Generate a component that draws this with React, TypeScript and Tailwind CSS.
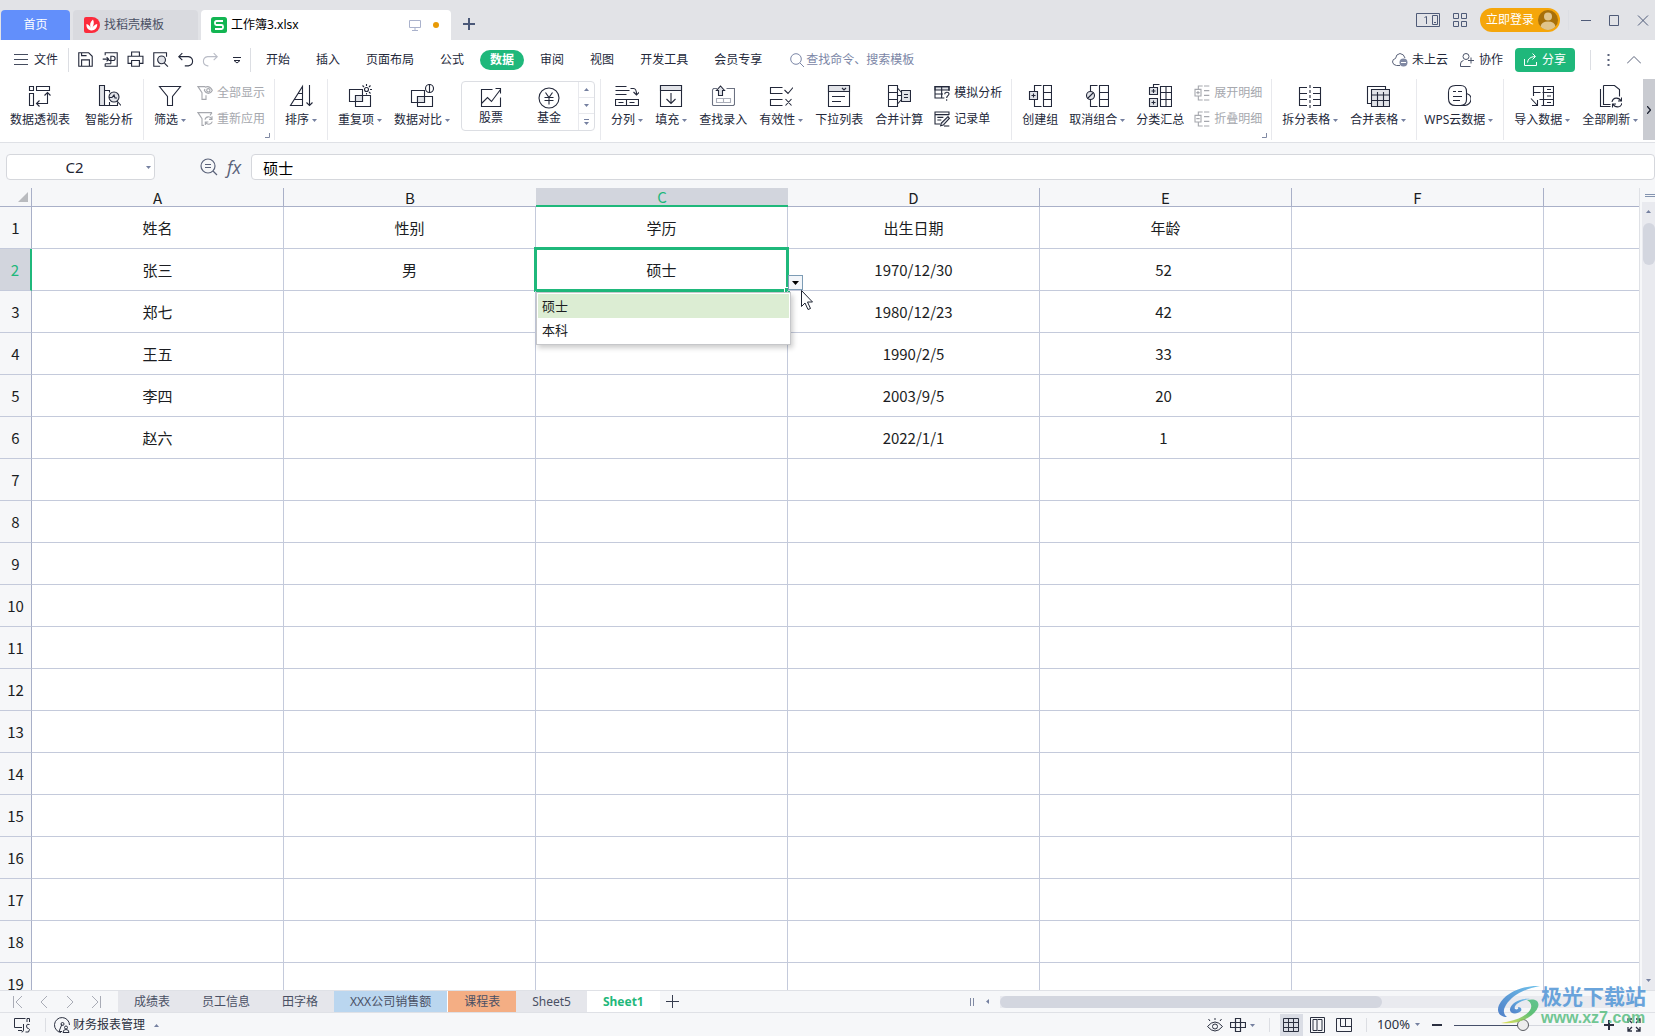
import { ReactNode, useState } from 'react'
import clsx from 'clsx'

const shade = '#e1e3e8'

// Line icons, all drawn on a 24px grid
const icons: Record<string, ReactNode> = {
  pivot: <path d="M1.5 2.5h4v4h-4zM8.5 2.5h13v4h-13zM1.5 9.5h4v12h-4zM19.5 8.5v11h-11M16.5 11.5l3-3 3 3M11.5 16.5l-3 3 3 3" />,
  analyze: (
    <>
      <path fill={shade} d="M2.5 1.5h5v20h-5z" />
      <path d="M7.5 6.5h5v2M7.5 21.5h13v-3M12.5 18v3.500M20 17l4 4.500" />
      <circle cx="17" cy="13" r="5" fill={shade} />
      <path d="M12 13.500h3l2-2.500 1 3h2" />
    </>
  ),
  filter: <path d="M1.5 2.5h21l-8 10v9h-5v-9z" />,
  filterEye: (
    <>
      <path d="M12.500 2.500H1.500l6 9v10h6v-6" />
      <path d="M12 3.500c4-2 8-1 11 4.500-3 6-9 6-12 0l1-2" />
      <circle cx="17" cy="8" r="2.500" />
    </>
  ),
  filterRedo: <path d="M22.500 2.500h-21l6 9v10h3M22.500 2.500l-3 4M12 13c1-5 8-6 10-1M22.500 8v4.500H18M23 16c-2 5-8 5-10 1M12.500 21v-4.500H17" />,
  sort: <path d="M1.500 21.500h12v-19zM5.500 15.500h8M9.500 9.500h4M20.500 1v20.500M17.500 18.500l3 3 3-3" />,
  repeat: (
    <>
      <path d="M1.500 5.500h13v12h-13zM7.500 11.500h15v11h-15z" />
      <path fill={shade} d="M7.500 11.500h7v6h-7z" />
      <circle cx="18.500" cy="5.500" r="2" />
      <path d="M18.500 0v2M18.500 9v1.500M13 5.500h2M22 5.500h2M14.500 1.500l1.500 1.500M22.500 1.500l-1.500 1.500M22.500 9.500l-1.500-1.500" />
    </>
  ),
  compare: (
    <>
      <path d="M1.500 6.500h13v12h-13zM7.500 12.500h15v10h-15z" />
      <path fill={shade} d="M7.500 12.500h7v6h-7z" />
      <circle cx="19.500" cy="4.500" r="4" fill="#fff" />
      <path d="M19.500 0v9" />
    </>
  ),
  stock: <path d="M13.500 3.500h-11v17h19v-9M2.500 17.500l6-6 4 4 9-12M16.500 2.500h5v5" />,
  fund: (
    <>
      <circle cx="12" cy="12" r="10" />
      <path d="M8.500 6.500l3.500 5 3.500-5M12 11.500v7M7.500 11.500h9M7.500 14.500h9" />
    </>
  ),
  split: <path d="M.5 2.500h11M.5 6.500h14M.5 10.500h11M.5 15.500h11v6H.5zM11.500 15.500h12v6h-12zM3.500 18.500h5M14.500 18.500h5M15.500 4.500h3q3 0 3 6M18.500 8l3 3 3-3" />,
  fill: (
    <>
      <path d="M1.500 1.500h21v21h-21z" />
      <path fill={shade} d="M1.500 1.500h21v5h-21z" />
      <path d="M12 9v10.500M7.500 15l4.500 4.500 4.500-4.500" />
    </>
  ),
  lookup: (
    <>
      <path d="M6 4.500H2.500L1.500 6v15l1 .5h20l1-1v-16h-8" stroke="#6b7181" />
      <path d="M5.500 14.500h7v4h-7zM12.500 14.500h7v4h-7z" stroke="#a9adb8" />
      <path fill={shade} d="M7.500 11.500v-5H5.500l4-4.500 4 4.500h-2v5z" />
    </>
  ),
  valid: <path d="M13.500 3.500h-12v6h12M13.500 15.500h-12v6h12M15.500 6l3.500 3.500 5-6M16.500 15l6 6.500M22.500 15l-6 6.500" />,
  dropList: (
    <>
      <path d="M1.500 1.500h21v21h-21z" />
      <path fill={shade} d="M1.500 1.500h21v6h-21z" />
      <path d="M15 4l2 2 2-2M5 12.500h13M5 17.500h9" />
    </>
  ),
  consolidate: (
    <>
      <path d="M1.500 1.500h9v21h-9zM1.500 8.500h9M1.500 15.500h9M10.500 4l4 4.500M10.500 20l4-4.500M10.500 11.500h4" />
      <path fill={shade} d="M14.500 6.500h9v11h-9z" />
      <path d="M17 10.500h4M17 13.500h4" />
    </>
  ),
  whatIf: (
    <>
      <path fill={shade} d="M1.500 2.500h21v5h-21z" />
      <path d="M22.500 9V2.500h-21v17h14M1.500 13.500h12M11.500 2.500v17M16 14c0-4 6-4 6.500-1s-3.500 3-3.500 6.500M19 21.500v2" />
    </>
  ),
  record: (
    <>
      <path d="M22.500 6V1.500h-21v18h8M1.500 5.500h21M5 9.500h9M5 13.500h6" />
      <path fill={shade} d="M21 8.500l2 2.500-9 10-4 1 1-4z" />
      <path d="M15 22.500h8" />
    </>
  ),
  group: (
    <>
      <path d="M13.500 1.500h-7v21h7M15.500 1.500h8v21h-8zM15.500 8.500h8M15.500 15.500h8" />
      <path fill={shade} d="M1.500 7.500h8v8h-8z" />
      <path d="M3.500 11.500h4M5.500 9.500v4" />
    </>
  ),
  ungroup: (
    <>
      <path d="M12.500 1.500h-7v21h7M14.500 1.500h9v21h-9zM14.500 8.500h9M14.500 15.500h9" />
      <circle cx="5.500" cy="11.500" r="4" fill={shade} />
      <path d="M2.500 14.500l6-6" />
    </>
  ),
  subtotal: (
    <>
      <path d="M12.500 2.500h11v20h-11zM12.500 8.500h11M12.500 15.500h11M18 2.500v20M5.500 4v-3.500h6" />
      <path fill={shade} d="M1.500 3.500h8v7h-8zM1.500 14.500h8v8h-8z" />
      <path d="M3.500 7h4M5.500 5v4M3.500 18.500h4M5.500 16.500v4" />
    </>
  ),
  expand: <path d="M13 1.500H6.500v4M6.500 17v5.500H13M1.500 6.500h9v10h-9zM3.500 11.500h5M6 9v5M15 1.500h8M15 8.500h8M15 15.500h8M15 22.500h8" />,
  collapse: <path d="M13 1.500H6.500v4M6.500 17v5.500H13M1.500 6.500h9v10h-9zM3.500 11.500h5M15 1.500h8M15 8.500h8M15 15.500h8M15 22.500h8" />,
  splitTable: (
    <>
      <path d="M9 3.500H1.500v18H9M15 3.500h7.500v18H15M1.500 9.500H9M1.500 15.500H9M15 9.500h7.500M15 15.500h7.500" />
      <path strokeDasharray="3 2" d="M12 1v23" />
    </>
  ),
  mergeTable: (
    <>
      <path d="M1.500 2.500h18v17h-18z" />
      <path fill={shade} d="M5.500 5.500h18v17h-18z" />
      <path d="M5.500 11h18M5.500 16.500h18M11.500 8v14.500M17.500 8v14.500" />
    </>
  ),
  cloudData: (
    <>
      <path d="M8.500 1.500h5q6 0 6 6v8q0 6-6 6h-5q-7 0-7-7v-6q0-7 7-7z" />
      <path d="M19.500 9.500q5 1.500 4.500 6t-6 6h-5M6 7.500h3M11 7.500h4M6 12.500h9M6 16.500h7" />
    </>
  ),
  importData: <path d="M3.500 12V2.500h20v19h-12M3.500 8.500h7M12.500 8.500h11M9.500 15.500h14M13.500 2.500v19M17 5.500h4M17 12h4M17 18.500h4M1 14.500l6.500 7M7.500 16v5.500H2" />,
  refresh: <path d="M5.500 1.500h11l5 4v7M12.500 20.500h-7v-19M2.500 5v17.500h10M14 18c1-5 7-5 9-1M23.500 13.500V17H20M24 19c-1 5-7 5-9 1M14.500 23.500V20H18" />,
  save: <path d="M2.500 2.500h14l5 5v14h-19zM6.500 21.500v-9h11v9M6.500 2.500v4h7" />,
  exportPdf: <path d="M4.500 6V2.500h17v19h-17V18M1 11.500h8M6.500 8.500l3 3-3 3M12.500 18V7.500h3q3 0 3 3t-3 3h-6M4.500 18h8" />,
  print: <path d="M6.500 7.500v-6h11v6M6.500 17.500h-5v-10h21v10h-5M6.500 13.500h11v8h-11z" />,
  preview: (
    <>
      <path d="M20.500 8V2.500h-18v19h9" />
      <circle cx="13.500" cy="12.500" r="5.500" fill={shade} />
      <path d="M17.500 17l5 5" />
    </>
  ),
  undo: <path d="M7.500 3L2.500 8l5 5M3 8h13q6 1 6 6.500t-6 6.500h-5" />,
  redo: <path d="M16.500 3l5 5-5 5M21 8H8q-6 1-6 6.500t6 6.500h1" />,
}

interface IconProps {
  name: string
  className?: string
}

function Icon({ name, className = 'size-6' }: IconProps) {
  // Small icons are scaled down, so the stroke is kept at one screen pixel
  return (
    <svg className={clsx('shrink-0 [&_*]:[vector-effect:non-scaling-stroke]', className)} viewBox="0 0 24 24" fill="none" stroke="currentColor" strokeWidth={1.1} aria-hidden="true">
      {icons[name]}
    </svg>
  )
}

function Caret({ up = false }: { up?: boolean }) {
  return (
    <svg className="w-[5px] h-[3px] shrink-0 text-[#7580a0]" viewBox="0 0 5 3" fill="currentColor" aria-hidden="true">
      <path d={up ? 'M0 3h5L2.500 0z' : 'M0 0h5L2.500 3z'} />
    </svg>
  )
}

function Divider({ className = 'h-6' }: { className?: string }) {
  return <span className={clsx('w-px shrink-0 bg-[#dcdee3]', className)} />
}

function TitleBar() {
  return (
    <header className="h-10 shrink-0 bg-[#e2e3e7] flex items-end pl-px pr-[6px]">
      <div className="flex items-end gap-[3px]">
        <button className="h-[30px] w-[69px] rounded-t bg-[#628ffb] text-white">首页</button>
        <button className="h-[30px] w-[125px] rounded-t bg-[#d9dadf] text-[#4a5064] flex items-center gap-1 pl-[11px]">
          <svg className="size-4" viewBox="0 0 16 16" aria-hidden="true">
            <path fill="#fc2b3c" d="M2 0h6a8 8 0 0 1 0 16H2q-2 0-2-2V2q0-2 2-2z" />
            <path fill="#fff" d="M7.500 13.500C4 13 2 10.500 2.500 7c2 .5 3.500 2 4.200 4C5.500 8 6 5 9 2.500c1.500 3 .8 5.500-.8 8.500 1-2 2.800-3.500 5-4 .3 3.500-2 6.500-5.700 6.500z" />
          </svg>
          找稻壳模板
        </button>
        <button className="h-[30px] w-[250px] rounded-t bg-white text-black flex items-center pl-[10px] pr-3">
          <svg className="size-4 mr-1" viewBox="0 0 16 16" aria-hidden="true">
            <rect width="16" height="16" rx="2.500" fill="#12b552" />
            <path fill="none" stroke="#fff" strokeWidth="1.800" d="M12 4H5.500Q4 4 4 5.500v1Q4 8 5.500 8h5Q12 8 12 9.500v1q0 1.500-1.500 1.500H4" />
          </svg>
          工作簿3.xlsx
          <svg className="w-3 h-3 ml-auto mr-3 text-[#aab2cc]" viewBox="0 0 12 12" fill="none" stroke="currentColor" aria-hidden="true">
            <path d="M.5 1.500h11v7H.5zM6 8.500v3M3 11.500h6" />
          </svg>
          <span className="size-1.5 rounded-full bg-[#e89a05]" />
        </button>
      </div>
      <button className="h-8 w-9 flex items-center justify-center text-[#4a5878]" aria-label="新建标签">
        <svg className="size-3" viewBox="0 0 12 12" stroke="currentColor" strokeWidth="2" aria-hidden="true">
          <path d="M6 0v12M0 6h12" />
        </svg>
      </button>

      <div className="ml-auto h-10 flex items-center text-[#4f5b78]">
        <button aria-label="窗口布局">
          <svg className="w-6 h-[14px]" viewBox="0 0 24 14" fill="none" stroke="currentColor" aria-hidden="true">
            <path d="M.5.5h23v13H.5zM16.500 2.500h5v9h-5zM8.500 4.500l2-1V11M18 9.500h2" />
          </svg>
        </button>
        <button className="ml-[13px]" aria-label="应用">
          <svg className="size-[14px]" viewBox="0 0 14 14" fill="none" stroke="currentColor" aria-hidden="true">
            <path d="M.5.5h5v5h-5zM8.500.5h5v5h-5zM.5 8.500h5v5h-5zM8.500 8.500h5v5h-5z" />
          </svg>
        </button>
        <button className="ml-[13px] h-6 w-20 rounded-full bg-[#f5a60b] text-white flex items-center gap-1 pl-1.5">
          立即登录
          <svg className="size-5" viewBox="0 0 20 20" aria-hidden="true">
            <circle cx="10" cy="10" r="10" fill="#a8700a" />
            <circle cx="10" cy="6.500" r="4" fill="#e0c48c" />
            <path fill="#e0c48c" d="M2.500 16.500q1-5 7.500-5t7.500 5A10 10 0 0 1 2.500 16.500z" />
          </svg>
        </button>
        <Divider className="h-5 ml-2 mr-[11px]" />
        <button aria-label="最小化">
          <svg className="size-3" viewBox="0 0 12 12" fill="none" stroke="currentColor" aria-hidden="true"><path d="M1 6.500h10" /></svg>
        </button>
        <button className="ml-4" aria-label="最大化">
          <svg className="size-3" viewBox="0 0 12 12" fill="none" stroke="currentColor" aria-hidden="true"><path d="M1.500 1.500h9v10h-9z" /></svg>
        </button>
        <button className="ml-[17px]" aria-label="关闭">
          <svg className="size-3" viewBox="0 0 12 12" fill="none" stroke="currentColor" aria-hidden="true"><path d="M1 1.500l10 10M11 1.500l-10 10" /></svg>
        </button>
      </div>
    </header>
  )
}

const menus = ['开始', '插入', '页面布局', '公式', '数据', '审阅', '视图', '开发工具', '会员专享']
const quickTools = [
  ['save', '保存'],
  ['exportPdf', '输出为PDF'],
  ['print', '打印'],
  ['preview', '打印预览'],
  ['undo', '撤销'],
  ['redo', '恢复'],
]

function MenuBar() {
  const [active, setActive] = useState('数据')

  return (
    <nav className="h-[39px] shrink-0 bg-white flex items-center pl-[14px] pr-[14px]">
      <button className="flex items-center gap-[6px]">
        <svg className="w-[14px] h-[11px] text-[#454c5e]" viewBox="0 0 14 11" fill="none" stroke="currentColor" aria-hidden="true">
          <path d="M0 .5h14M0 5.500h14M0 10.500h14" />
        </svg>
        文件
      </button>
      <Divider className="h-6 ml-[10px] mr-2" />
      <div className="flex items-center gap-2">
        {quickTools.map(([name, label]) => (
          <button key={name} aria-label={label} className={name === 'redo' ? 'text-[#b9bcc6]' : ''}>
            <Icon name={name} className="size-[17px]" />
          </button>
        ))}
        <button aria-label="更多" className="ml-1.5">
          <svg className="size-2" viewBox="0 0 8 8" fill="none" stroke="currentColor" aria-hidden="true">
            <path d="M0 1.500h8M1 4.500l3 2.500 3-2.500z" />
          </svg>
        </button>
      </div>
      <Divider className="h-6 ml-[9px] mr-[5px]" />
      <div className="flex gap-[6px]">
        {menus.map((menu) => (
          <button
            key={menu}
            onClick={() => setActive(menu)}
            className={clsx('h-5 px-[10px] rounded-full', active === menu && 'bg-[#1fb87b] text-white font-bold')}
          >
            {menu}
          </button>
        ))}
      </div>
      <label className="ml-[18px] flex items-center gap-[2px] text-[#7b86a6]">
        <svg className="size-[14px]" viewBox="0 0 14 14" fill="none" stroke="currentColor" aria-hidden="true">
          <circle cx="6" cy="6" r="5.300" />
          <path d="M10 10l4 4" />
        </svg>
        <input aria-label="查找命令" placeholder="查找命令、搜索模板" className="w-[112px] outline-none placeholder:text-[#7b86a6]" />
      </label>

      <div className="ml-auto flex items-center">
        <button className="flex items-center gap-1">
          <svg className="w-4 h-[14px]" viewBox="0 0 16 14" fill="none" stroke="#5b637a" aria-hidden="true">
            <path d="M8 12.500H4.500Q1 12 .5 9 .5 6 3.500 5.500 4 1 8 .5q4 .5 5 4.500" />
            <circle cx="11.500" cy="9.500" r="4" fill="#8089a3" stroke="none" />
            <path stroke="#fff" d="M9 9.500h5" />
          </svg>
          未上云
        </button>
        <button className="ml-3 flex items-center gap-[5px]">
          <svg className="size-[14px]" viewBox="0 0 14 14" fill="none" stroke="#4c546a" aria-hidden="true">
            <circle cx="6" cy="3.500" r="3" />
            <path d="M3.500 7.500Q.5 8 .5 11v2.500h10M8 7.500h6M11 4.500v6" />
          </svg>
          协作
        </button>
        <button className="ml-3 h-6 w-[60px] rounded bg-[#1fb87b] text-white flex items-center gap-[5px] pl-[9px]">
          <svg className="size-[13px]" viewBox="0 0 13 13" fill="none" stroke="currentColor" aria-hidden="true">
            <path d="M.5 6v6.500h12V9M3.500 9.500Q4 4 11 3.500M8.500.5l3 3-3 3" />
          </svg>
          分享
        </button>
        <Divider className="h-5 ml-[15px] mr-4" />
        <button aria-label="更多选项">
          <svg className="w-[3px] h-3" viewBox="0 0 3 12" fill="#5b637a" aria-hidden="true">
            <path d="M.5 0h2v2h-2zM.5 5h2v2h-2zM.5 10h2v2h-2z" />
          </svg>
        </button>
        <button className="ml-[17px]" aria-label="收起功能区">
          <svg className="w-[14px] h-2" viewBox="0 0 14 8" fill="none" stroke="#5b637a" aria-hidden="true"><path d="M0 7.500l7-7 7 7" /></svg>
        </button>
      </div>
    </nav>
  )
}

interface ToolProps {
  icon: string
  label: string
  menu?: boolean
}

function Tool({ icon, label, menu = false }: ToolProps) {
  return (
    <button className="shrink-0 px-[5px] pt-[5px] flex flex-col items-center">
      <Icon name={icon} />
      <span className="mt-1 flex items-center gap-[3px] leading-4">
        {label}
        {menu && <Caret />}
      </span>
    </button>
  )
}

interface SmallToolsProps {
  tools: [string, string][]
  disabled?: boolean
}

function SmallTools({ tools, disabled = false }: SmallToolsProps) {
  return (
    <div className={clsx('flex flex-col gap-2 px-1 pt-[5px]', disabled && 'text-[#a6a8ae]')}>
      {tools.map(([icon, label]) => (
        <button key={label} disabled={disabled} className="h-[18px] flex items-center gap-1 whitespace-nowrap">
          <Icon name={icon} className="size-4" />
          {label}
        </button>
      ))}
    </div>
  )
}

interface GroupProps {
  children: ReactNode
  spacing?: string
  launcher?: boolean
}

function Group({ children, spacing = 'gap-[2px] px-[5px]', launcher = false }: GroupProps) {
  return (
    <div className={clsx('relative h-[61px] shrink-0 flex items-start border-r border-[#e8e9ed]', spacing)}>
      {children}
      {launcher && (
        <svg className="absolute right-1 bottom-[2px] size-[5px] text-[#8089a3]" viewBox="0 0 5 5" fill="none" stroke="currentColor" aria-hidden="true">
          <path d="M4.500 0v4.500H0" />
        </svg>
      )}
    </div>
  )
}

function Ribbon() {
  return (
    <section className="relative z-10 h-[64px] shrink-0 bg-white flex items-start overflow-hidden border-b border-[#dfe1e6]">
      <div className="flex-1 min-w-0 overflow-hidden flex">
        <Group spacing="gap-[5px] px-[5px]">
          <Tool icon="pivot" label="数据透视表" />
          <Tool icon="analyze" label="智能分析" />
        </Group>
        <Group launcher>
          <Tool icon="filter" label="筛选" menu />
          <SmallTools disabled tools={[['filterEye', '全部显示'], ['filterRedo', '重新应用']]} />
        </Group>
        <Group>
          <Tool icon="sort" label="排序" menu />
        </Group>
        <Group>
          <Tool icon="repeat" label="重复项" menu />
          <Tool icon="compare" label="数据对比" menu />
          <div className="h-[50px] w-[134px] ml-1 mt-[2px] rounded-sm border border-[#dcdee3] flex">
            <button className="flex-1 pt-1 flex flex-col items-center leading-4">
              <Icon name="stock" />
              股票
            </button>
            <button className="flex-1 pt-1 flex flex-col items-center leading-4">
              <Icon name="fund" />
              基金
            </button>
            <div className="w-4 border-l border-[#e8e9ed] grid grid-rows-3 divide-y divide-[#e8e9ed]">
              <button className="flex items-center justify-center" aria-label="上一行"><Caret up /></button>
              <button className="flex items-center justify-center" aria-label="下一行"><Caret /></button>
              <button className="flex flex-col items-center justify-center gap-[2px]" aria-label="全部数据类型">
                <span className="w-[5px] h-px bg-[#7580a0]" />
                <Caret />
              </button>
            </div>
          </div>
        </Group>
        <Group>
          <Tool icon="split" label="分列" menu />
          <Tool icon="fill" label="填充" menu />
          <Tool icon="lookup" label="查找录入" />
          <Tool icon="valid" label="有效性" menu />
          <Tool icon="dropList" label="下拉列表" />
          <Tool icon="consolidate" label="合并计算" />
          <SmallTools tools={[['whatIf', '模拟分析'], ['record', '记录单']]} />
        </Group>
        <Group launcher spacing="gap-px px-[5px]">
          <Tool icon="group" label="创建组" />
          <Tool icon="ungroup" label="取消组合" menu />
          <Tool icon="subtotal" label="分类汇总" />
          <SmallTools disabled tools={[['expand', '展开明细'], ['collapse', '折叠明细']]} />
        </Group>
        <Group>
          <Tool icon="splitTable" label="拆分表格" menu />
          <Tool icon="mergeTable" label="合并表格" menu />
        </Group>
        <Group spacing="pl-[2px] pr-[5px]">
          <Tool icon="cloudData" label="WPS云数据" menu />
        </Group>
        <div className="pl-[5px] flex items-start gap-[2px]">
          <Tool icon="importData" label="导入数据" menu />
          <Tool icon="refresh" label="全部刷新" menu />
        </div>
      </div>
      <button className="h-[61px] w-3 shrink-0 bg-[#c9cbd1] flex items-center justify-center" aria-label="向右滚动">
        <svg className="w-1 h-2" viewBox="0 0 4 8" fill="none" stroke="#1f2433" strokeWidth="1.300" aria-hidden="true"><path d="M0 0l3.500 4L0 8" /></svg>
      </button>
    </section>
  )
}

function FormulaBar() {
  return (
    <div className="h-[45px] shrink-0 flex items-start pt-[11px] pl-1.5 text-[15px] text-black">
      <div className="h-[26px] w-[149px] shrink-0 rounded-sm border border-[#d5d7dc] bg-white flex items-center pr-[3px]">
        <input aria-label="名称框" defaultValue="C2" className="w-full min-w-0 pr-1 text-center outline-none text-[#1f2433]" />
        <Caret />
      </div>
      <div className="h-[26px] ml-[45px] flex items-center gap-[9px] text-[#5b637a]">
        <svg className="size-[18px]" viewBox="0 0 18 18" fill="none" stroke="currentColor" strokeWidth="1.200" aria-hidden="true">
          <circle cx="8" cy="8" r="7" />
          <path d="M5 6.500h6M5 9.500h6M13 13l4 4" />
        </svg>
        <button className="font-['Open_Sans'] italic text-lg leading-none" aria-label="插入函数">fx</button>
      </div>
      <input
        aria-label="编辑栏"
        defaultValue="硕士"
        className="ml-[10px] h-[26px] flex-1 min-w-0 rounded-sm border border-[#d5d7dc] bg-white px-[11px] outline-none"
      />
    </div>
  )
}

const columns = ['A', 'B', 'C', 'D', 'E', 'F', '']
const cells = [
  ['姓名', '性别', '学历', '出生日期', '年龄'],
  ['张三', '男', '硕士', '1970/12/30', '52'],
  ['郑七', '', '', '1980/12/23', '42'],
  ['王五', '', '', '1990/2/5', '33'],
  ['李四', '', '', '2003/9/5', '20'],
  ['赵六', '', '', '2022/1/1', '1'],
]
const rows = Array.from({ length: 19 }, (_, i) => i + 1)

// Frame round the selected cell, with its validation list open
function ActiveCell({ value }: { value: string }) {
  return (
    <>
      {value}
      <span className="absolute -inset-0.5 border-[3px] border-[#1fb87b] pointer-events-none" />
      <span className="absolute -right-[3px] -bottom-[3px] size-[6px] border-l border-t border-white bg-[#1fb87b]" />
      <button className="absolute left-full bottom-0 ml-px size-[15px] z-10 border border-[#7d9cb5] bg-[#f3f6fa] flex items-center justify-center" aria-label="打开下拉列表">
        <svg className="w-[7px] h-1" viewBox="0 0 7 4" aria-hidden="true"><path d="M0 0h7L3.500 4z" /></svg>
      </button>
      <ul
        role="listbox"
        aria-label="学历"
        className="absolute left-0 top-full mt-[2px] w-[255px] z-10 border border-[#c6c7ca] bg-white p-px pb-[2px] text-left text-[13px] shadow-[2px_3px_5px_rgba(0,0,0,0.2)]"
      >
        <li role="option" aria-selected="true" className="h-6 leading-6 px-1 bg-[#dcedd3]">硕士</li>
        <li role="option" aria-selected="false" className="h-6 leading-6 px-1">本科</li>
      </ul>
      <svg className="absolute left-full top-full ml-[14px] w-3 h-5 z-20" viewBox="0 0 12 20" fill="#fff" stroke="#1f2433" aria-hidden="true">
        <path d="M.5.500v16l3.500-3.500 3 6.500 2.500-1-3-6.500h5z" />
      </svg>
    </>
  )
}

function Sheet() {
  return (
    <main className="flex-1 min-h-0 flex">
      <div className="flex-1 min-w-0 overflow-hidden bg-white border-r border-[#dfe1e6]">
        <table className="w-full table-fixed border-separate border-spacing-0 text-center text-[15px] text-[#1b1d22] font-['Noto_Sans_CJK_SC',sans-serif]">
          <colgroup>
            <col className="w-8" />
            <col className="w-[252px]" />
            <col className="w-[252px]" />
            <col className="w-[252px]" />
            <col className="w-[252px]" />
            <col className="w-[252px]" />
            <col className="w-[252px]" />
            <col />
          </colgroup>
          <thead>
            <tr className="h-[19px] bg-[#f6f7f9] leading-4">
              <td className="p-0 border-r border-b border-[#a9b0c8]">
                <svg className="ml-auto mr-[3px] size-[10px]" viewBox="0 0 10 10" fill="#b9bbbf" aria-hidden="true"><path d="M10 0v10H0z" /></svg>
              </td>
              {columns.map((col) => (
                <th
                  key={col}
                  scope="col"
                  className={clsx(
                    'h-[19px] p-0 font-normal align-bottom',
                    col === 'C'
                      ? 'bg-[#d2d5dd] text-[#1fb87b] border-b-2 border-[#1fb87b]'
                      : 'border-b border-[#a9b0c8]',
                    (col === 'A' || col === 'D' || col === 'E' || col === 'F') && 'border-r',
                  )}
                >
                  {col}
                </th>
              ))}
            </tr>
          </thead>
          <tbody>
            {rows.map((row) => (
              <tr key={row} className="h-[42px]">
                <th
                  scope="row"
                  className={clsx(
                    'p-0 font-normal border-b border-b-[#c4cadb]',
                    row === 2
                      ? 'bg-[#d2d5dd] text-[#1fb87b] border-r-2 border-r-[#1fb87b]'
                      : 'bg-[#f6f7f9] border-r border-r-[#a9b0c8]',
                  )}
                >
                  {row}
                </th>
                {columns.map((col, i) => {
                  const value = cells[row - 1]?.[i] ?? ''
                  return (
                    <td
                      key={col}
                      className={clsx(
                        'relative py-0 pl-0 border-b border-[#c4cadb]',
                        i < 6 && 'border-r',
                        col === 'E' && row > 1 ? 'pr-1' : 'pr-0',
                      )}
                    >
                      {row === 2 && col === 'C' ? <ActiveCell value={value} /> : value}
                    </td>
                  )
                })}
              </tr>
            ))}
          </tbody>
        </table>
      </div>
      <div className="w-[15px] shrink-0 pl-[2px] flex flex-col">
        <div className="h-[14px] flex flex-col justify-center gap-px pl-[3px]">
          <span className="w-[10px] h-px bg-[#8494b0]" />
          <span className="w-[10px] h-px bg-[#8494b0]" />
        </div>
        <div className="flex-1 bg-[#e9eaef] flex flex-col items-center pt-2 pb-2">
          <Caret up />
          <span className="mt-[10px] w-3 h-[42px] rounded-full bg-[#d3d6df]" />
          <span className="mt-auto flex"><Caret /></span>
        </div>
      </div>
    </main>
  )
}

const sheetTabs = [
  { name: '成绩表', style: 'bg-[#e5e6eb]' },
  { name: '员工信息', style: 'bg-[#e5e6eb]' },
  { name: '田字格', style: 'bg-[#e5e6eb]' },
  { name: 'XXX公司销售额', style: 'bg-[#bad6ef] border-r border-white' },
  { name: '课程表', style: 'bg-[#f4ae84]' },
  { name: 'Sheet5', style: 'bg-[#e5e6eb]' },
  { name: 'Sheet1', style: 'bg-white text-[#1fb87b] font-bold' },
]
const navArrows = [
  ['第一张', 'M.5 0v12M9 0L3 6l6 6'],
  ['上一张', 'M8 0L2 6l6 6'],
  ['下一张', 'M2 0l6 6-6 6'],
  ['最后一张', 'M1 0l6 6-6 6M9.500 0v12'],
]

function SheetTabs() {
  return (
    <div className="h-[23px] shrink-0 flex items-center border-t border-b border-[#dfe1e6]">
      <div className="w-[118px] shrink-0 flex gap-4 pl-[13px]">
        {navArrows.map(([label, d]) => (
          <button key={label} aria-label={label}>
            <svg className="w-[10px] h-3" viewBox="0 0 10 12" fill="none" stroke="#a9acb6" aria-hidden="true"><path d={d} /></svg>
          </button>
        ))}
      </div>
      <div className="h-full flex text-[#4a5064]">
        {sheetTabs.map((tab) => (
          <button key={tab.name} className={clsx('h-full px-4 whitespace-nowrap', tab.style)}>{tab.name}</button>
        ))}
      </div>
      <button className="ml-[6px]" aria-label="新建工作表">
        <svg className="size-[13px]" viewBox="0 0 13 13" stroke="#363c4e" aria-hidden="true"><path d="M6.500 0v13M0 6.500h13" /></svg>
      </button>
      <div className="ml-auto w-[685px] flex items-center">
        <span className="w-1 h-2 border-x border-[#8089a3]" />
        <svg className="ml-3 w-[3px] h-[5px]" viewBox="0 0 3 5" fill="#7580a0" aria-hidden="true"><path d="M3 0v5L0 2.500z" /></svg>
        <div className="ml-[11px] h-3 flex-1 bg-[#e9eaef]">
          <div className="h-3 w-[382px] rounded-full bg-[#d3d6df]" />
        </div>
        <span className="w-4" />
      </div>
    </div>
  )
}

function StatusBar() {
  return (
    <footer className="h-[23px] shrink-0 flex items-center pl-[14px] pr-[14px] pt-px text-[#2b3040]">
      <button aria-label="宏编辑器">
        <svg className="size-4" viewBox="0 0 16 16" fill="none" stroke="currentColor" aria-hidden="true">
          <path d="M8 10.500H.5v-9h11M4 13.500h4M13 5V1.500h2.500V5M9.500 7v6q0 2-2 2M15.500 7.500q-3-1-3 1.500t2 2.500 0 3.500h-3" />
        </svg>
      </button>
      <Divider className="h-[14px] ml-[15px] mr-2" />
      <button className="flex items-center gap-[3px]">
        <svg className="size-4" viewBox="0 0 16 16" fill="none" stroke="currentColor" aria-hidden="true">
          <path d="M7 15.500A7.500 7.500 0 1 1 15.500 8M8 14.500H5L8 7" />
          <circle cx="8.500" cy="7" r="1.500" />
          <circle cx="12" cy="10.500" r="1.500" />
          <path d="M9 15.500q0-3 3-3t3 3z" />
        </svg>
        财务报表管理
        <span className="ml-1.5"><Caret up /></span>
      </button>

      <div className="ml-auto flex items-center">
        <button aria-label="护眼模式">
          <svg className="w-4 h-[14px]" viewBox="0 0 16 14" fill="none" stroke="currentColor" aria-hidden="true">
            <path d="M.5 8.500Q8-.5 15.500 8.500 8 17.500.5 8.500zM3 3L1.500 1M8 2V0M13 3l1.500-2" />
            <circle cx="8" cy="8.500" r="2.500" />
          </svg>
        </button>
        <button className="ml-[7px] flex items-center gap-1" aria-label="阅读模式">
          <svg className="w-4 h-[14px]" viewBox="0 0 16 14" fill="none" stroke="currentColor" strokeWidth="1.200" aria-hidden="true">
            <path d="M5.500.5h5v13h-5zM.5 4.500h15v5H.5z" />
          </svg>
          <Caret />
        </button>
        <Divider className="h-[14px] ml-[14px] mr-[10px]" />
        <button className="h-[22px] w-[23px] bg-[#dadde5] flex items-center justify-center" aria-label="普通视图">
          <svg className="w-4 h-[14px]" viewBox="0 0 16 14" fill="none" stroke="currentColor" aria-hidden="true">
            <path d="M.5.500h15v13H.5zM.5 4.500h15M.5 9.500h15M5.500.5v13M10.500.5v13" />
          </svg>
        </button>
        <button className="ml-[7px]" aria-label="分页预览">
          <svg className="w-[15px] h-4" viewBox="0 0 15 16" fill="none" stroke="currentColor" aria-hidden="true">
            <path d="M.5.500h14v15H.5zM3 2.500h4v11H3zM7.500 2.500H12v11H7.500" />
          </svg>
        </button>
        <button className="ml-[11px]" aria-label="页面布局">
          <svg className="w-4 h-[14px]" viewBox="0 0 16 14" fill="none" stroke="currentColor" aria-hidden="true">
            <path d="M.5.500h15v13H.5zM4.500.5v8h11M9.500.5v8" />
          </svg>
        </button>
        <Divider className="h-[14px] ml-[14px] mr-[10px]" />
        <button className="flex items-center gap-[5px] text-[13px]">
          100%
          <Caret />
        </button>
        <button className="ml-3" aria-label="缩小">
          <svg className="size-[10px]" viewBox="0 0 10 10" stroke="currentColor" strokeWidth="2" aria-hidden="true"><path d="M0 5h10" /></svg>
        </button>
        <input
          type="range"
          aria-label="显示比例"
          defaultValue={50}
          className="ml-3 w-[138px] h-3 appearance-none bg-[linear-gradient(to_right,#46506a_50%,#d5d8df_50%)] bg-[length:100%_1px] bg-center bg-no-repeat [&::-webkit-slider-thumb]:appearance-none [&::-webkit-slider-thumb]:size-3 [&::-webkit-slider-thumb]:rounded-full [&::-webkit-slider-thumb]:border [&::-webkit-slider-thumb]:border-[#5a5c62] [&::-webkit-slider-thumb]:bg-[#ededed]"
        />
        <button className="ml-3" aria-label="放大">
          <svg className="size-[10px]" viewBox="0 0 10 10" stroke="currentColor" strokeWidth="2" aria-hidden="true"><path d="M0 5h10M5 0v10" /></svg>
        </button>
        <button className="ml-[13px]" aria-label="全屏">
          <svg className="size-[14px]" viewBox="0 0 14 14" fill="none" stroke="currentColor" strokeWidth="1.300" aria-hidden="true">
            <path d="M1 5V1h4M1 1l4 4M9 1h4v4M13 1L9 5M1 9v4h4M1 13l4-4M13 9v4H9M13 13L9 9" />
          </svg>
        </button>
      </div>
    </footer>
  )
}

function SiteMark() {
  return (
    <div className="absolute right-[9px] bottom-2 z-20 flex items-center pointer-events-none opacity-90 whitespace-nowrap">
      <svg className="w-[44px] h-[42px]" viewBox="0 0 44 42" aria-hidden="true">
        <defs>
          <linearGradient id="markBlue" x1="0" y1="1" x2="1" y2="0">
            <stop offset="0" stopColor="#3f74c4" />
            <stop offset="1" stopColor="#62bdea" />
          </linearGradient>
          <linearGradient id="markGreen" x1="0" y1="1" x2="1" y2="0">
            <stop offset="0" stopColor="#e6e04a" />
            <stop offset="0.600" stopColor="#4fbb6a" />
            <stop offset="1" stopColor="#54c08a" />
          </linearGradient>
        </defs>
        <path fill="url(#markBlue)" d="M43 1C25 0 8 8 2 20c-3 7 1 12 8 12-4-3-4-7-1-12C15 11 26 4 43 1z" />
        <path fill="url(#markBlue)" d="M33 14c-10-1-19 4-20 10-1 5 7 6 11 2 1-2 0-4-3-4 1 2-1 3-3 2-2-4 6-9 15-10z" />
        <path fill="url(#markGreen)" d="M30 15c8-2 13 1 11 7-3 9-18 18-37 16 14-2 27-7 30-15 1-4-1-6-4-8z" />
      </svg>
      <div>
        <p className="text-[21px] leading-6 font-bold text-[#5a9bd8]">极光下载站</p>
        <p className="text-base leading-5 font-bold text-[#62c188] font-['Liberation_Sans',sans-serif]">www.xz7.com</p>
      </div>
    </div>
  )
}

export default function App() {
  return (
    <div className="relative h-screen overflow-hidden flex flex-col bg-[#f6f7f9] text-xs text-[#23283a] font-['Noto_Sans','Noto_Sans_CJK_SC',sans-serif]">
      <TitleBar />
      <MenuBar />
      <Ribbon />
      <FormulaBar />
      <Sheet />
      <SheetTabs />
      <StatusBar />
      <SiteMark />
    </div>
  )
}
